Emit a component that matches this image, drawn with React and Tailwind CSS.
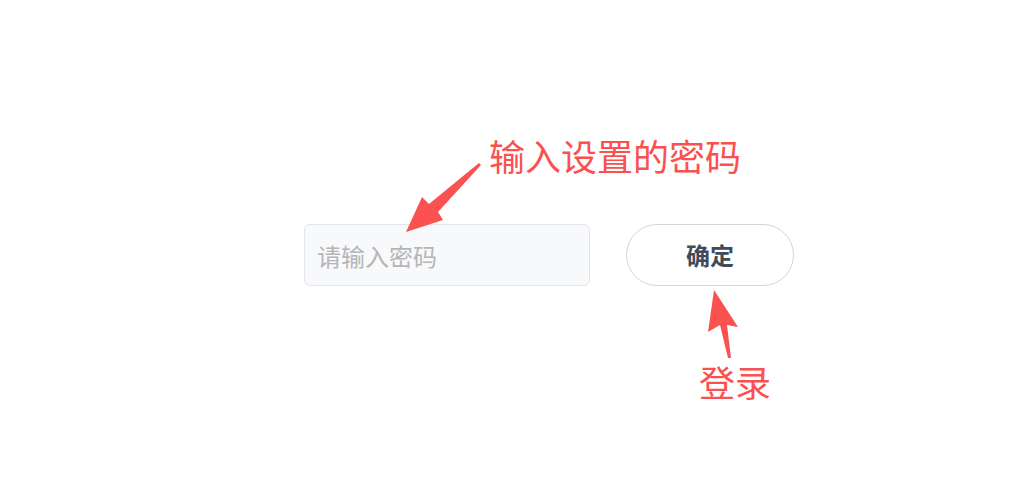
export default function App() {
  return (
    <div className="relative w-[1020px] h-[498px] bg-white overflow-hidden font-['Noto_Sans_CJK_SC',sans-serif]">
      {/* form row */}
      <div className="flex items-center gap-9 pt-[224px] pl-[304px]">
        <input
          type="password"
          placeholder="请输入密码"
          className="w-[286px] h-[62px] rounded-md border border-[#e3e5ea] bg-[#f8f9fb] px-[12px] text-[24px] text-gray-700 placeholder:text-[#b5b5b8] outline-none"
        />
        <button className="w-[168px] h-[62px] rounded-full border border-[#d4d5da] bg-white text-[24px] font-bold text-[#414b5a]">
          确定
        </button>
      </div>

      {/* annotations */}
      <span className="absolute left-[489px] top-[131px] text-[36px] leading-[48px] text-[#fb5050]">
        输入设置的密码
      </span>
      <span className="absolute left-[699px] top-[357px] text-[36px] leading-[48px] text-[#fb5050]">
        登录
      </span>
      <svg className="absolute inset-0" width="1020" height="498" viewBox="0 0 1020 498">
        <polygon
          points="481,165 438,212 443,220 406,232 422,197 429,204 479,163"
          fill="#fa5151"
        />
        <polygon
          points="714,290 738,327 727,325 731,358 728,358 720,325 708,332"
          fill="#fa5151"
        />
      </svg>
    </div>
  );
}
